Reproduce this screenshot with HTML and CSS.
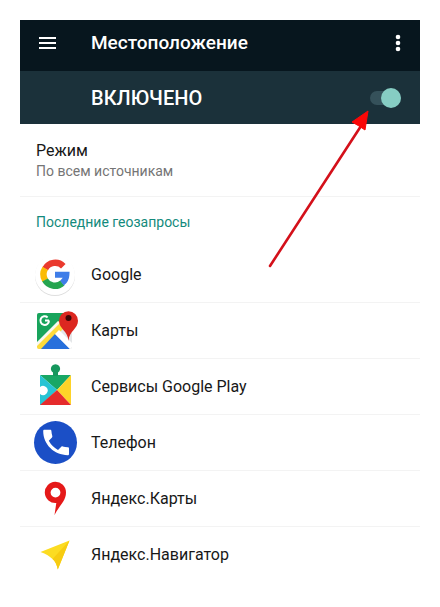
FILE: index.html
```html
<!DOCTYPE html>
<html lang="ru">
<head>
<meta charset="utf-8">
<meta name="viewport" content="width=device-width, initial-scale=1">
<title>Местоположение</title>
<link rel="stylesheet" href="styles.css">
</head>
<body>
<main class="screen">
  <header class="toolbar">
    <button class="icon-button" type="button" aria-label="Меню">
      <svg width="20" height="14" viewBox="0 0 20 14"><path d="M2 2h17M2 7h17M2 12h17" stroke="#fff" stroke-width="2"/></svg>
    </button>
    <h1 class="title">Местоположение</h1>
    <button class="icon-button more" type="button" aria-label="Ещё">
      <svg width="6" height="18" viewBox="0 0 6 18" fill="#fff"><circle cx="3" cy="3" r="2.3"/><circle cx="3" cy="9" r="2.3"/><circle cx="3" cy="15" r="2.3"/></svg>
    </button>
  </header>
  <div class="switch-bar">
    <label class="switch-label" for="location">ВКЛЮЧЕНО</label>
    <input class="switch" id="location" type="checkbox" role="switch" checked>
  </div>
  <section class="mode">
    <h2 class="mode-title">Режим</h2>
    <p class="mode-value">По всем источникам</p>
  </section>
  <h2 class="section-title">Последние геозапросы</h2>
  <ul class="apps">
    <li class="app">
      <svg class="app-icon" viewBox="0 0 48 48">
        <circle cx="23" cy="25" r="20" fill="#dedede"/>
        <circle cx="23" cy="24" r="20" fill="#fff"/>
        <g fill="none" stroke-width="6.400">
          <path d="M13.200 17.800A11.400 11.400 0 0 1 31.300 15.200" stroke="#ea3a2e"/>
          <path d="M13.200 29.400A11.400 11.400 0 0 1 13.200 17.400" stroke="#fbbc05"/>
          <path d="M30.400 32A11.400 11.400 0 0 1 13 29" stroke="#26a550"/>
          <path d="M23 23.800h11.400A11.400 11.400 0 0 1 30 32.200" stroke="#3f7de8" stroke-width="6"/>
        </g>
      </svg>
      <span class="app-name">Google</span>
    </li>
    <li class="app">
      <svg class="app-icon" viewBox="0 0 48 48">
        <rect x="5" y="6" width="35" height="36" rx="2" fill="#e4e6e8"/>
        <path d="M7 6h30L5 38V8a2 2 0 0 1 2-2z" fill="#18a45c"/>
        <path d="M5 36 27 14l6 6L11 42H7a2 2 0 0 1-2-2z" fill="#fddb3c"/>
        <path d="M5 35 26 14l2 2L5 39z" fill="#f8f8f2"/>
        <path d="M9 42 23 27l15 15z" fill="#2870dc"/>
        <path d="m23 27 4-4 13 13v4l-2 2z" fill="#fff"/>
        <path d="M17 13.500h-4M17 13.500A4.300 4.300 0 1 1 15.600 10.400" fill="none" stroke="#fff" stroke-width="2"/>
        <path d="M36.500 34C36 24 27 22 27 13.800a9.500 9.500 0 0 1 19 0C46 22 37 24 36.500 34z" fill="#dc2720"/>
        <circle cx="36.500" cy="11" r="3" fill="#400606"/>
      </svg>
      <span class="app-name">Карты</span>
    </li>
    <li class="app">
      <svg class="app-icon" viewBox="0 0 48 48">
        <path d="M8 12h31L25 27z" fill="#18a765"/>
        <path d="M21 13V9.600a4.600 4.600 0 1 1 5 0V13z" fill="#16975d"/>
        <path d="m8 12 17 15L9 42H8V31a4.600 4.600 0 1 0 0-7z" fill="#27c4d4"/>
        <path d="M39 12v30L25 27z" fill="#fed328"/>
        <path d="m25 27 14 15H8z" fill="#e52b2c"/>
      </svg>
      <span class="app-name">Сервисы Google Play</span>
    </li>
    <li class="app">
      <svg class="app-icon" viewBox="0 0 48 48">
        <circle cx="23.500" cy="23.500" r="21.500" fill="#1b4fc6"/>
        <path d="M12.500 10.800h5.600c.8 0 1.300.5 1.300 1.300.1 1.800.4 3.400.9 5 .2.500 0 1-.3 1.400l-3.200 3.300a22 22 0 0 0 9.200 9.100l3.300-3.100c.4-.4.9-.5 1.400-.4 1.600.5 3.200.8 5 .9.800 0 1.300.5 1.300 1.300v5.300c0 .8-.5 1.300-1.300 1.300-13.500 0-24.500-10.600-24.500-24.100 0-.8.5-1.300 1.300-1.300z" fill="#fff"/>
      </svg>
      <span class="app-name">Телефон</span>
    </li>
    <li class="app">
      <svg class="app-icon" viewBox="0 0 48 48">
        <path fill-rule="evenodd" d="M22.500 40 24.300 28A10.600 10.600 0 1 1 34 17.500C34 26 27 31 22.500 40zM23.500 12.700a4.900 4.900 0 1 0 0 9.800 4.900 4.900 0 1 0 0-9.800z" fill="#e51919"/>
      </svg>
      <span class="app-name">Яндекс.Карты</span>
    </li>
    <li class="app">
      <svg class="app-icon" viewBox="0 0 48 48">
        <path d="M37.500 9.500 25.800 38.500C25 34 23 30 20.500 28 18 25.500 14 23 8.500 21z" fill="#fcdc22"/>
        <path d="M37.500 9.500 25.800 38.500C25 34 23 30 20.500 28z" fill="#f7cc12"/>
      </svg>
      <span class="app-name">Яндекс.Навигатор</span>
    </li>
  </ul>
  <svg class="pointer" width="104" height="160" viewBox="0 0 104 160" aria-hidden="true">
    <path d="M4 156 95 16" stroke="#d4101a" stroke-width="2.600" stroke-linecap="round"/>
    <path d="M102 1 99 20l-6-4-7-4z" fill="#fb0707" stroke="#fb0707"/>
  </svg>
</main>
</body>
</html>
```
FILE: styles.css
```css
* {
  box-sizing: border-box;
}

body {
  margin: 0;
  padding: 20px;
  background: #fff;
  color: #181818;
  font-family: Roboto, "Noto Sans", sans-serif;
  font-size: 16px;
  line-height: 20px;
}

h1,
h2,
p,
ul {
  margin: 0;
  padding: 0;
  font-weight: 400;
}

.screen {
  position: relative;
}

.toolbar {
  display: flex;
  align-items: center;
  height: 51px;
  padding: 0 16px 5px;
  background: #07161e;
  color: #fff;
}

.icon-button {
  display: flex;
  flex: none;
  width: 55px;
  padding: 0 1px;
  border: 0;
  background: none;
}

.more {
  width: 12px;
  padding: 0 3px;
}

.title {
  flex: 1;
  font-size: 19px;
  font-weight: 500;
  line-height: 24px;
}

.switch-bar {
  display: flex;
  align-items: center;
  justify-content: space-between;
  height: 53px;
  padding: 0 19px 0 71px;
  background: #1b313a;
  color: #fff;
}

.switch-label {
  font-size: 20px;
  font-weight: 500;
  line-height: 24px;
}

.switch {
  display: flex;
  align-items: center;
  justify-content: flex-end;
  appearance: none;
  width: 31px;
  height: 14px;
  margin: 0;
  border-radius: 7px;
  background: #35515a;
}

.switch::before {
  content: "";
  width: 20px;
  height: 20px;
  flex: none;
  border-radius: 50%;
  background: #86cdc3;
}

.mode {
  padding: 17px 16px 15px;
  border-bottom: 1px solid #f3f3f3;
}

.mode-title {
  font-size: 16px;
}

.mode-value {
  color: #757575;
  font-size: 14px;
}

.section-title {
  padding: 15px 16px;
  color: #138a7c;
  font-size: 14px;
}

.apps {
  list-style: none;
}

.app {
  display: flex;
  align-items: center;
  gap: 11px;
  height: 56px;
  padding: 0 12px;
  border-bottom: 1px solid #f3f3f3;
}

.app:last-child {
  border-bottom: 0;
}

.app-icon {
  flex: none;
  width: 48px;
  height: 48px;
}

.pointer {
  position: absolute;
  top: 90px;
  right: 50px;
}
```
